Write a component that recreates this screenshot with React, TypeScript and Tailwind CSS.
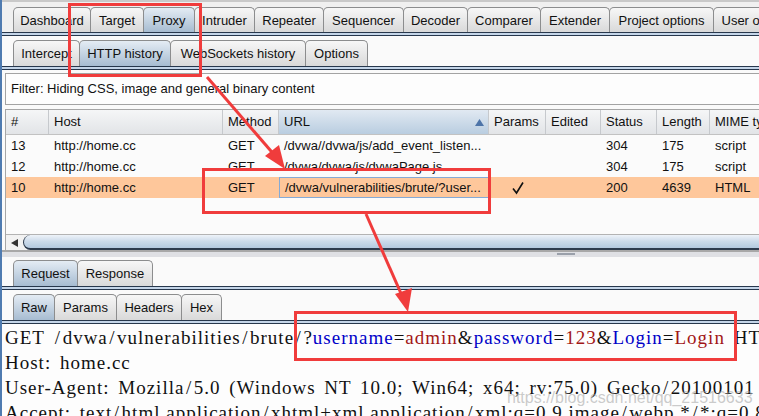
import React from "react";

const Tab = ({ label, w, sel, first }: { label: string; w: number; sel?: boolean; first?: boolean }) => (
  <div
    className={`h-full shrink-0 flex items-center justify-center border border-[#8c8d8e] border-b-0 rounded-t-[5px] text-[13px] leading-none text-[#111] whitespace-nowrap ${
      first ? "" : "-ml-px"
    } ${sel ? "bg-linear-to-b from-[#e4ecf4] to-[#a7bcd1]" : "bg-linear-to-b from-[#f7f7f7] to-[#d9d9d9]"}`}
    style={{ width: w }}
  >
    {label}
  </div>
);

const Band = () => (
  <div className="flex flex-col">
    <div className="h-[1px] bg-[#27374c]" />
    <div className="h-[2px] bg-[#c4d5e8]" />
    <div className="h-[1px] bg-[#27374c]" />
  </div>
);

const Slashy = ({ text }: { text: string }) => {
  const parts = text.split("/");
  return (
    <>
      {parts.map((p, i) => (
        <React.Fragment key={i}>
          {p}
          {i < parts.length - 1 && <span className="mx-[1.5px]">/</span>}
        </React.Fragment>
      ))}
    </>
  );
};

const cols = "grid grid-cols-[43px_174px_56px_210px_57px_55px_56px_53px_80px]";

const headers = ["#", "Host", "Method", "URL", "Params", "Edited", "Status", "Length", "MIME type"];

const rows = [
  { n: "13", url: "/dvwa//dvwa/js/add_event_listen...", p: false, st: "304", len: "175", mime: "script", sel: false },
  { n: "12", url: "/dvwa/dvwa/js/dvwaPage.js", p: false, st: "304", len: "175", mime: "script", sel: false },
  { n: "10", url: "/dvwa/vulnerabilities/brute/?user...", p: true, st: "200", len: "4639", mime: "HTML", sel: true },
];

const mainTabs: [string, number][] = [
  ["Dashboard", 78],
  ["Target", 54],
  ["Proxy", 52],
  ["Intruder", 61],
  ["Repeater", 70],
  ["Sequencer", 81],
  ["Decoder", 65],
  ["Comparer", 74],
  ["Extender", 70],
  ["Project options", 105],
  ["User options", 90],
];
const subTabs: [string, number][] = [
  ["Intercept", 67],
  ["HTTP history", 92],
  ["WebSockets history", 136],
  ["Options", 63],
];
const reqTabs: [string, number][] = [
  ["Request", 65],
  ["Response", 76],
];
const rawTabs: [string, number][] = [
  ["Raw", 42],
  ["Params", 63],
  ["Headers", 66],
  ["Hex", 41],
];

export default function App() {
  return (
    <div
      className="relative w-[759px] h-[416px] overflow-hidden bg-[#fafafa] border-l-2 border-[#4f7bb0] text-[#111]"
      style={{ fontFamily: '"Liberation Sans", Arial, sans-serif' }}
    >
      {/* top strip */}
      <div className="h-[7px] border-t-2 border-[#c9c9c9] bg-[#f0f0f0]" />
      {/* main tabs */}
      <div className="h-[25px] flex items-end pl-[11px] bg-[#f0f0f0] w-[900px]">
        {mainTabs.map(([t, w], i) => (
          <Tab key={t} label={t} w={w} sel={t === "Proxy"} first={i === 0} />
        ))}
      </div>
      <Band />
      <div className="h-[4px]" />
      {/* sub tabs */}
      <div className="h-[26px] flex items-end pl-[11px]">
        {subTabs.map(([t, w], i) => (
          <Tab key={t} label={t} w={w} sel={t === "HTTP history"} first={i === 0} />
        ))}
      </div>
      <Band />
      {/* filter */}
      <div className="pt-[3px] pl-[3px] pb-[4px]">
        <div className="h-[32px] border border-[#a3a3a3] border-r-0 bg-[#fdfdfd] flex items-center pl-[5px] text-[13px]">
          Filter: Hiding CSS, image and general binary content
        </div>
      </div>
      {/* table */}
      <div className="ml-[3px] border-l border-t border-[#a6a6a6] bg-[#fbfbfb] h-[141px] flex flex-col">
        <div className={`${cols} h-[25px] border-b border-[#c2c2c2] text-[13px]`}>
          {headers.map((h) => (
            <div
              key={h}
              className={`relative flex items-center pl-[5px] border-r border-[#c6c9cd] whitespace-nowrap overflow-hidden ${
                h === "URL" ? "bg-linear-to-b from-[#e1e9f2] to-[#b9cde0]" : "bg-linear-to-b from-[#f5f6f7] to-[#e2e4e7]"
              }`}
            >
              {h}
              {h === "URL" && (
                <svg className="absolute right-[4px] top-[9px]" width="9" height="7" viewBox="0 0 9 7">
                  <polygon points="4.5,0 9,7 0,7" fill="#4d74a8" />
                </svg>
              )}
            </div>
          ))}
        </div>
        {rows.map((r) => (
          <div key={r.n} className={`${cols} h-[21px] text-[13px] ${r.sel ? "bg-[#fec79b]" : ""}`}>
            <div className="flex items-center pl-[5px]">{r.n}</div>
            <div className="flex items-center pl-[5px]">http://home.cc</div>
            <div className="flex items-center pl-[5px]">GET</div>
            <div
              className={`flex items-center pl-[5px] whitespace-nowrap overflow-hidden ${
                r.sel ? "border border-[#84aad6]" : ""
              }`}
            >
              {r.url}
            </div>
            <div className="flex items-center justify-center">
              {r.p && (
                <svg width="14" height="14" viewBox="0 0 14 14">
                  <path d="M2 7.5 L5.5 12 L12 1.5" fill="none" stroke="#111" strokeWidth="1.6" />
                </svg>
              )}
            </div>
            <div />
            <div className="flex items-center pl-[5px]">{r.st}</div>
            <div className="flex items-center pl-[5px]">{r.len}</div>
            <div className="flex items-center pl-[5px]">{r.mime}</div>
          </div>
        ))}
        <div className="flex-1" />
        {/* horizontal scrollbar */}
        <div className="h-[16px] border-t border-[#b3b3b3] flex bg-[#f2f2f2]">
          <div className="w-[17px] flex items-center justify-center">
            <svg width="7" height="8" viewBox="0 0 7 8">
              <polygon points="0,4 7,0 7,8" fill="#333" />
            </svg>
          </div>
          <div className="flex-1 rounded-l-[9px] border-l border-b-2 border-[#2d3b4e] bg-linear-to-b from-[#eef3f9] via-[#cbdaea] to-[#b3c9df]" />
        </div>
      </div>
      {/* divider */}
      <div className="h-[2px] bg-[#a8a8a8]" />
      <div className="h-[5px] bg-[#dfe0e4] relative">
        <div className="absolute left-[555px] top-[1px] w-[18px] h-[2px] bg-[#9aa0aa]" />
      </div>
      <div className="h-[3px]" />
      {/* request/response tabs */}
      <div className="h-[26px] flex items-end pl-[11px]">
        {reqTabs.map(([t, w], i) => (
          <Tab key={t} label={t} w={w} sel={t === "Request"} first={i === 0} />
        ))}
      </div>
      <Band />
      <div className="h-[4px]" />
      <div className="h-[26px] flex items-end pl-[11px]">
        {rawTabs.map(([t, w], i) => (
          <Tab key={t} label={t} w={w} sel={t === "Raw"} first={i === 0} />
        ))}
      </div>
      <Band />
      {/* raw text */}
      <div
        className="pl-[3px] pt-[1px] text-[19px] leading-[25px] tracking-[1px] [word-spacing:3px] whitespace-nowrap text-[#111] bg-[#fdfdfd]"
        style={{ fontFamily: '"Liberation Serif", "Times New Roman", serif' }}
      >
        <div>
          <Slashy text="GET /dvwa/vulnerabilities/brute/" />?<span className="text-[#0000c8]">username</span>=
          <span className="text-[#a11616]">admin</span>&amp;<span className="text-[#0000c8]">password</span>=
          <span className="text-[#a11616]">123</span>&amp;<span className="text-[#0000c8]">Login</span>=
          <span className="text-[#a11616]">Login</span> HTTP<span className="mx-[1.5px]">/</span>1.1
        </div>
        <div>Host: home.cc</div>
        <div>
          <Slashy text="User-Agent: Mozilla/5.0 (Windows NT 10.0; Win64; x64; rv:75.0) Gecko/20100101 Firefox/75.0" />
        </div>
        <div>
          <Slashy text="Accept: text/html,application/xhtml+xml,application/xml;q=0.9,image/webp,*/*;q=0.8" />
        </div>
      </div>

      {/* watermark */}
      <div className="absolute left-[505px] top-[386px] text-[16px] text-[rgba(160,160,160,0.55)] whitespace-nowrap">
        https://blog.csdn.net/qq_21516633
      </div>

      {/* red annotation boxes */}
      <div className="absolute left-[66px] top-[3px] w-[134px] h-[74px] border-[3px] border-[#f03c3c]" />
      <div className="absolute left-[200px] top-[168px] w-[289px] h-[46px] border-[3px] border-[#f03c3c]" />
      <div className="absolute left-[292px] top-[311px] w-[443px] h-[50px] border-[3px] border-[#f03c3c]" />
      <svg className="absolute left-0 top-0 pointer-events-none" width="759" height="416" viewBox="0 0 759 416">
        <line x1="205" y1="77" x2="275" y2="158" stroke="#f03c3c" strokeWidth="3" />
        <polygon points="283,169 263,156 277,145" fill="#f03c3c" />
        <line x1="364" y1="214" x2="401" y2="298" stroke="#f03c3c" strokeWidth="3" />
        <polygon points="406,312 393,294 410,288" fill="#f03c3c" />
      </svg>
    </div>
  );
}
